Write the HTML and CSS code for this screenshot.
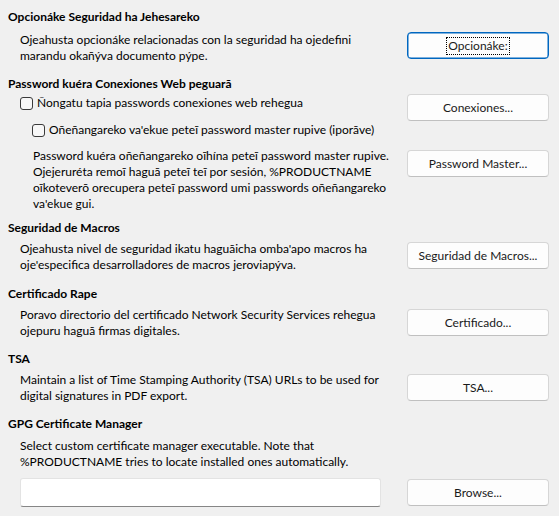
FILE: index.html
```html
<!DOCTYPE html>
<html lang="gn">
<head>
<meta charset="utf-8">
<title>Seguridad</title>
<link rel="stylesheet" href="styles.css">
</head>
<body>
<div class="page">
  <section class="sec s1">
    <h2 class="head">Opcionáke Seguridad ha Jehesareko</h2>
    <div class="row r1">
      <p class="desc">Ojeahusta opcionáke relacionadas con la seguridad ha ojedefini<br>marandu okañýva documento pýpe.</p>
      <div class="btncol"><button class="btn focus b1"><span class="ring">Opcionáke:</span></button></div>
    </div>
  </section>

  <section class="sec s2">
    <h2 class="head">Password kuéra Conexiones Web peguarã</h2>
    <div class="row r2">
      <div class="main">
        <label class="check c1"><span class="box"></span><span>Ñongatu tapia passwords conexiones web rehegua</span></label>
        <label class="check c2"><span class="box"></span><span>Oñeñangareko va'ekue peteĩ password master rupive (iporãve)</span></label>
        <p class="desc d2">Password kuéra oñeñangareko oĩhína peteĩ password master rupive.<br>Ojejeruréta remoĩ haguã peteĩ teĩ por sesión, %PRODUCTNAME<br>oĩkoteverõ orecupera peteĩ password umi passwords oñeñangareko<br>va'ekue gui.</p>
      </div>
      <div class="btncol">
        <button class="btn b2a">Conexiones...</button>
        <button class="btn b2b">Password Master...</button>
      </div>
    </div>
  </section>

  <section class="sec s3">
    <h2 class="head">Seguridad de Macros</h2>
    <div class="row r3">
      <p class="desc">Ojeahusta nivel de seguridad ikatu haguãicha omba'apo macros ha<br>oje'especifica desarrolladores de macros jeroviapýva.</p>
      <div class="btncol"><button class="btn b3">Seguridad de Macros...</button></div>
    </div>
  </section>

  <section class="sec s4">
    <h2 class="head">Certificado Rape</h2>
    <div class="row r4">
      <p class="desc">Poravo directorio del certificado Network Security Services rehegua<br>ojepuru haguã firmas digitales.</p>
      <div class="btncol"><button class="btn b4">Certificado...</button></div>
    </div>
  </section>

  <section class="sec s5">
    <h2 class="head">TSA</h2>
    <div class="row r5">
      <p class="desc">Maintain a list of Time Stamping Authority (TSA) URLs to be used for<br>digital signatures in PDF export.</p>
      <div class="btncol"><button class="btn b5">TSA...</button></div>
    </div>
  </section>

  <section class="sec s6">
    <h2 class="head">GPG Certificate Manager</h2>
    <div class="indent">
      <p class="desc">Select custom certificate manager executable. Note that<br>%PRODUCTNAME tries to locate installed ones automatically.</p>
    </div>
    <div class="row r6">
      <div class="main"><input class="field" type="text"></div>
      <div class="btncol"><button class="btn b6">Browse...</button></div>
    </div>
  </section>
</div>
</body>
</html>
```

FILE: styles.css
```css
* { box-sizing: border-box; }
html, body { margin: 0; padding: 0; }
body {
  background: #f0f0f0;
  color: #000;
  font-family: "Lato", "Open Sans", sans-serif;
  font-size: 12px;
  line-height: 16px;
  width: 559px;
  height: 516px;
  overflow: hidden;
}
.page { padding: 9px 10px 0 8px; }
.sec { margin: 0; }
.head { margin: 0; font-size: 12px; font-weight: 700; line-height: 16px; white-space: nowrap; }
.desc { margin: 0; white-space: nowrap; }
.row { display: flex; padding-left: 12px; }
.row > .desc, .row > .main { flex: 1; min-width: 0; }
.indent { padding-left: 12px; }
.btncol { width: 142px; flex: none; display: flex; flex-direction: column; }
.btn {
  width: 142px;
  height: 27px;
  padding: 0;
  background: #fdfdfd;
  border: 1px solid #d6d6d6;
  border-bottom-color: #c0c0c0;
  border-radius: 4px;
  font: inherit;
  color: #1a1a1a;
  display: flex;
  align-items: center;
  justify-content: center;
}
.btn.focus { border: 1px solid #0067c0; box-shadow: inset 0 0 0 0.5px #0067c0; }
.ring { outline: 1px dotted #000; outline-offset: 0; padding: 0 1px; line-height: 16px; }

.check { display: flex; align-items: center; white-space: nowrap; height: 16px; }
.box {
  width: 13px; height: 13px; flex: none;
  border: 1px solid #3a3a3a; border-radius: 3px;
  background: #f7f7f7;
  margin-right: 4px;
}
.c1 { padding-left: 0; margin-top: 3px; }
.c2 { padding-left: 12px; margin-top: 11px; }
.d2 { padding-left: 13px; margin-top: 10px; }

.s1 .r1 { margin-top: 7px; }
.s2 { margin-top: 12px; }
.b2a { margin-top: 2px; }
.b2b { margin-top: 29px; }
.s3 { margin-top: 8px; }
.r3 { margin-top: 5px; }
.b3 { margin-top: 1px; }
.s4 { margin-top: 13px; }
.r4 { margin-top: 5px; }
.b4 { margin-top: 2px; }
.s5 { margin-top: 12px; }
.r5 { margin-top: 5px; }
.b5 { margin-top: 2px; }
.s6 { margin-top: 12px; }
.s6 .indent { margin-top: 6px; }
.r6 { margin-top: 8px; }
.b6 { margin-top: 1px; }
.r6 .main { padding-right: 26px; }
.field {
  width: 100%;
  height: 29px;
  background: #fff;
  border: 1px solid #e3e3e3;
  border-bottom: 1px solid #868686;
  border-radius: 3px;
  font: inherit;
  display: block;
}
```
